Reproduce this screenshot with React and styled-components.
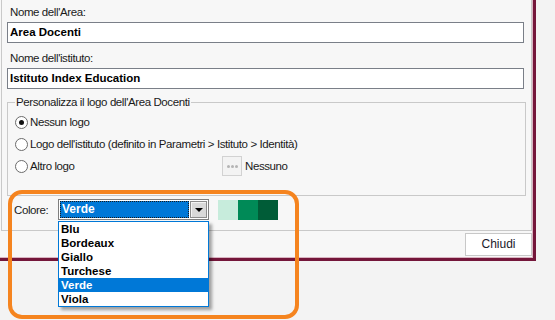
import React from "react";
import styled, { createGlobalStyle } from "styled-components";

const GlobalStyle = createGlobalStyle`
  body {
    margin: 0;
    background: #f3f3f3;
    font-family: "Liberation Sans", Arial, sans-serif;
    color: #111;
  }
`;

const colori = ["Blu", "Bordeaux", "Giallo", "Turchese", "Verde", "Viola"];
const verdi = ["#c7ecdc", "#008a57", "#005c37"];

function App() {
  return (
    <Page>
      <GlobalStyle />
      <Window>
        <Panel>
          <Label first>Nome dell'Area:</Label>
          <TextBox>Area Docenti</TextBox>
          <Label>Nome dell'istituto:</Label>
          <TextBox>Istituto Index Education</TextBox>

          <Group>
            <Legend>Personalizza il logo dell'Area Docenti</Legend>
            <RadioRow>
              <Radio checked />
              <span>Nessun logo</span>
            </RadioRow>
            <RadioRow>
              <Radio />
              <span>Logo dell'istituto (definito in Parametri &gt; Istituto &gt; Identità)</span>
            </RadioRow>
            <RadioRow>
              <RadioLabel>
                <Radio />
                <span>Altro logo</span>
              </RadioLabel>
              <DotsButton>
                <Dot />
                <Dot />
                <Dot />
              </DotsButton>
              <span>Nessuno</span>
            </RadioRow>
          </Group>

          <ColorRow>
            <ColorLabel>Colore:</ColorLabel>
            <Select>
              <SelectValue>Verde</SelectValue>
              <ArrowButton>
                <Triangle />
              </ArrowButton>
              <List>
                {colori.map((c) => (
                  <Item key={c} active={c === "Verde"}>{c}</Item>
                ))}
              </List>
            </Select>
            <Swatches>
              {verdi.map((c) => (
                <Swatch key={c} color={c} />
              ))}
            </Swatches>
          </ColorRow>
        </Panel>
        <Footer>
          <Button>Chiudi</Button>
        </Footer>
      </Window>
      <Highlight />
    </Page>
  );
}

export default App;

const Page = styled.div`
  position: relative;
  width: 555px;
  height: 320px;
  overflow: hidden;
`;

const Window = styled.div`
  width: 533px;
  height: 258px;
  background: #f7f7f7;
  border-right: 3px solid #74163a;
  border-bottom: 3px solid #74163a;
  box-shadow: inset -1px -1px 0 #d9b4c1;
  display: flex;
  flex-direction: column;
`;

const Panel = styled.div`
  box-sizing: border-box;
  margin-left: 1px;
  width: 531px;
  height: 231px;
  border: 1px solid #c9c9c9;
  border-top: none;
  padding-left: 5px;
  display: flex;
  flex-direction: column;
  font-size: 11.5px;
  letter-spacing: -0.4px;
`;

const Label = styled.div`
  height: ${(p) => (p.first ? "22px" : "25px")};
  padding-top: ${(p) => (p.first ? "2px" : "5px")};
  box-sizing: border-box;
  line-height: 20px;
  padding-left: 3px;
  color: #1a1a1a;
`;

const TextBox = styled.div`
  box-sizing: border-box;
  width: 517px;
  height: 21px;
  border: 1px solid #7a7f88;
  background: #fff;
  font-weight: bold;
  letter-spacing: 0;
  line-height: 19px;
  padding-left: 2px;
  color: #000;
`;

const Group = styled.fieldset`
  box-sizing: border-box;
  width: 519px;
  margin: 6px 0 0 0;
  border: 1px solid #c9c9c9;
  padding: 2px 7px 18px 7px;
  min-width: 0;
`;

const Legend = styled.legend`
  padding: 0 1px;
  line-height: 14px;
  color: #1a1a1a;
`;

const RadioRow = styled.div`
  display: flex;
  align-items: center;
  height: 22px;
  color: #1a1a1a;
`;

const RadioLabel = styled.div`
  display: flex;
  align-items: center;
  width: 207px;
`;

const Radio = styled.span`
  box-sizing: border-box;
  width: 13px;
  height: 13px;
  border-radius: 50%;
  border: 1px solid #6b6b6b;
  background: #fff;
  margin-right: 2px;
  position: relative;
  flex-shrink: 0;

  &::after {
    content: "";
    display: ${(p) => (p.checked ? "block" : "none")};
    position: absolute;
    left: 3px;
    top: 3px;
    width: 5px;
    height: 5px;
    border-radius: 50%;
    background: #111;
  }
`;

const DotsButton = styled.div`
  box-sizing: border-box;
  width: 20px;
  height: 20px;
  border: 1px solid #d2d2d2;
  background: #f3f3f3;
  display: flex;
  align-items: center;
  justify-content: center;
  gap: 1px;
  margin-right: 3px;
`;

const Dot = styled.span`
  width: 3px;
  height: 3px;
  border-radius: 50%;
  background: #b4b4b4;
`;

const ColorRow = styled.div`
  display: flex;
  align-items: center;
  margin-top: 3px;
  height: 21px;
`;

const ColorLabel = styled.div`
  width: 44px;
  padding-left: 7px;
  color: #1a1a1a;
`;

const Select = styled.div`
  position: relative;
  box-sizing: border-box;
  width: 151px;
  height: 21px;
  border: 1px solid #7e7e7e;
  padding: 1px;
  background: #fff;
  display: flex;
  gap: 1px;
  letter-spacing: 0;
`;

const SelectValue = styled.div`
  flex: 1;
  box-sizing: border-box;
  background: #0078d7;
  border: 1px dotted #1b1b1b;
  color: #fff;
  font-weight: bold;
  font-size: 12px;
  line-height: 15px;
  padding-left: 1px;
`;

const ArrowButton = styled.div`
  box-sizing: border-box;
  width: 17px;
  background: #d9d9d9;
  border: 1px solid #8c8c8c;
  box-shadow: inset 1px 1px 0 #f4f4f4;
  display: flex;
  align-items: center;
  justify-content: center;
`;

const Triangle = styled.span`
  width: 0;
  height: 0;
  border-left: 4px solid transparent;
  border-right: 4px solid transparent;
  border-top: 4px solid #000;
`;

const List = styled.div`
  position: absolute;
  left: -1px;
  top: 21px;
  width: 151px;
  box-sizing: border-box;
  border: 1px solid #0078d7;
  background: #fff;
  box-shadow: 3px 3px 3px rgba(0, 0, 0, 0.35);
  z-index: 2;
`;

const Item = styled.div`
  height: 14px;
  line-height: 14px;
  padding-left: 2px;
  font-weight: bold;
  font-size: 11.5px;
  background: ${(p) => (p.active ? "#0078d7" : "transparent")};
  color: ${(p) => (p.active ? "#fff" : "#000")};
`;

const Swatches = styled.div`
  display: flex;
  margin-left: 9px;
`;

const Swatch = styled.div`
  width: 20px;
  height: 20px;
  background: ${(p) => p.color};
`;

const Footer = styled.div`
  display: flex;
  justify-content: flex-end;
  padding: 2px 1px 0 0;
`;

const Button = styled.div`
  box-sizing: border-box;
  width: 67px;
  height: 23px;
  background: #fff;
  border: 1px solid #c8c8c8;
  font-size: 12px;
  line-height: 21px;
  text-align: center;
  color: #1a1a2a;
`;

const Highlight = styled.div`
  position: absolute;
  left: 8px;
  top: 190px;
  width: 291px;
  height: 129px;
  box-sizing: border-box;
  border: 4px solid #f5841f;
  border-radius: 14px;
  pointer-events: none;
  z-index: 3;
`;
